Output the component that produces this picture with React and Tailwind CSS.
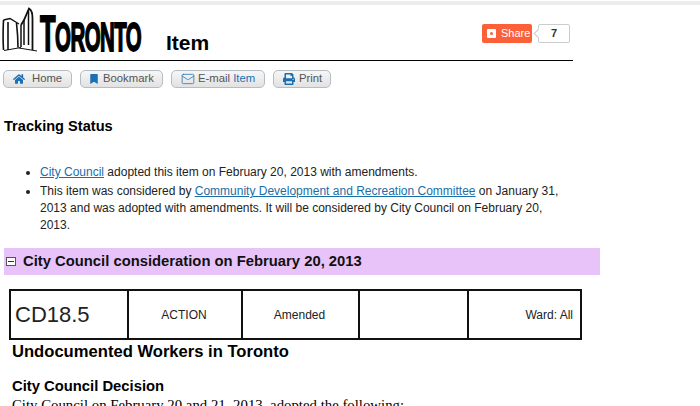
import { FaHome, FaBookmark, FaPrint } from 'react-icons/fa'
import { Mail } from 'lucide-react'

function NavButton({ width, children }) {
  return (
    <a className={`flex h-[18px] items-center rounded-[5px] border border-[#b4bcc4] bg-gradient-to-b from-[#f6f6f6] to-[#e2e2e2] text-[11.3px] leading-none text-[#555] ${width}`}>
      {children}
    </a>
  )
}

function Logo() {
  return (
    <svg width="36" height="46" viewBox="2 6 36 46" fill="none" stroke="#111" className="shrink-0">
      <path d="M3.5 20 C3 30 3 42 3.5 50" strokeWidth="1.6" />
      <path d="M8 22 L8 50" strokeWidth="1.6" />
      <path d="M3.5 20 L10 18.5 L19 24" strokeWidth="1.4" />
      <path d="M16.5 23 C17.5 32 18 40 18 47.5" strokeWidth="1.6" />
      <path d="M21 25 L21 47 M24 20 L24 45" strokeWidth="1.5" />
      <path d="M21 25 L24 20 L29 8.5 C31.5 10 32.5 13 32.5 18 L32.5 50" strokeWidth="1.8" />
      <path d="M28.5 10 L28.5 45" strokeWidth="1.5" />
      <path d="M4 50.5 L21 47.5 M19 48 L37 51" strokeWidth="1" />
    </svg>
  )
}

export default function App() {
  return (
    <div className="h-[406px] w-[700px] overflow-hidden bg-white font-['Liberation_Sans',Arial,sans-serif] text-[12px] text-[#111]">
      <div className="h-[5px] border-t border-white bg-[#ececec]" />

      <header className="flex h-[56px] w-[573px] items-start border-b border-black">
        <div className="ml-[2px] mt-[1px]">
          <Logo />
        </div>
        <div className="ml-[2px] mt-[4px] w-[101px] origin-left scale-x-[0.51] whitespace-nowrap text-[50px] leading-[50px] font-bold tracking-[-1px] text-black [-webkit-text-stroke:1.8px_black]">
          T<span className="text-[40px]">ORONTO</span>
        </div>
        <h1 className="ml-[25px] mt-[25px] text-[21px] leading-[26px] font-bold text-black">Item</h1>
        <div className="ml-auto mr-[3px] mt-[19px] flex items-center">
          <a className="flex h-[19px] w-[50px] items-center rounded-[2px] bg-[#fc6038] pl-[5px] text-[11px] text-white">
            <span className="mr-[5px] flex h-[9px] w-[9px] items-center justify-center rounded-[1px] bg-white">
              <span className="h-[3px] w-[3px] rounded-full bg-[#fc6038]" />
            </span>
            Share
          </a>
          <span className="relative ml-[6px] flex h-[19px] w-[32px] items-center justify-center rounded-[2px] border border-[#ccc] bg-white text-[11px] text-[#333]">
            <span className="absolute left-[-4px] top-[5px] h-[7px] w-[7px] rotate-45 border-b border-l border-[#ccc] bg-white" />
            <span className="font-bold">7</span>
          </span>
        </div>
      </header>

      <nav className="ml-[3px] mt-[9px] flex gap-[8px]">
        <NavButton width="w-[69px] pl-[9px]">
          <FaHome size={12} color="#1a6fb5" />
          <span className="ml-[7px]">Home</span>
        </NavButton>
        <NavButton width="w-[83px] pl-[8px]">
          <FaBookmark size={10} color="#1a6fb5" />
          <span className="ml-[4px]">Bookmark</span>
        </NavButton>
        <NavButton width="w-[94px] pl-[9px]">
          <Mail size={14} color="#1a6fb5" strokeWidth={1.3} />
          <span className="ml-[3px]">
            E-mail <span className="text-[#1a6fb5]">Item</span>
          </span>
        </NavButton>
        <NavButton width="w-[58px] pl-[9px]">
          <FaPrint size={12} color="#1a6fb5" />
          <span className="ml-[4px]">Print</span>
        </NavButton>
      </nav>

      <h2 className="ml-[4px] mt-[29px] text-[14.6px] leading-[18px] font-bold text-black">Tracking Status</h2>

      <ul className="ml-[40px] mt-[29px] w-[525px] list-disc text-[12px] leading-[17px] text-[#222]">
        <li>
          <a className="text-[#1a6fa8] underline">City Council</a> adopted this item on February 20, 2013 with amendments.
        </li>
        <li className="mt-[2px]">
          This item was considered by <a className="text-[#1a6fa8] underline">Community Development and Recreation Committee</a> on January 31, 2013 and was adopted with amendments. It will be considered by City Council on February 20, 2013.
        </li>
      </ul>

      <div className="ml-[4px] mt-[14px] flex h-[27px] w-[596px] items-center bg-[#e7c3f9]">
        <span className="ml-[2px] flex h-[9px] w-[10px] items-center justify-center border border-[#555] bg-white">
          <span className="h-px w-[6px] bg-[#333]" />
        </span>
        <h2 className="ml-[7px] text-[14.8px] font-bold text-[#111]">City Council consideration on February 20, 2013</h2>
      </div>

      <div className="ml-[9px] mt-[14px] flex h-[51px] w-[573px] border-2 border-[#111] text-[12px] text-[#222]">
        <div className="flex w-[116px] items-center pl-[4px] text-[22px]">CD18.5</div>
        <div className="flex w-[114px] items-center justify-center border-l-2 border-[#111] pr-[2px]">ACTION</div>
        <div className="flex w-[117px] items-center justify-center border-l-2 border-[#111] pr-[2px]">Amended</div>
        <div className="w-[109px] border-l-2 border-[#111]" />
        <div className="flex flex-1 items-center justify-end border-l-2 border-[#111] pr-[7px]">Ward: All</div>
      </div>

      <h2 className="ml-[12px] mt-[2px] text-[16.6px] leading-[20px] font-bold text-black">Undocumented Workers in Toronto</h2>
      <h3 className="ml-[12px] mt-[15px] text-[14.8px] leading-[18px] font-bold text-black">City Council Decision</h3>
      <p className="ml-[12px] mt-[2px] font-['Liberation_Serif',serif] text-[14.8px] leading-[16px] text-black">City Council on February 20 and 21, 2013, adopted the following:</p>
    </div>
  )
}
